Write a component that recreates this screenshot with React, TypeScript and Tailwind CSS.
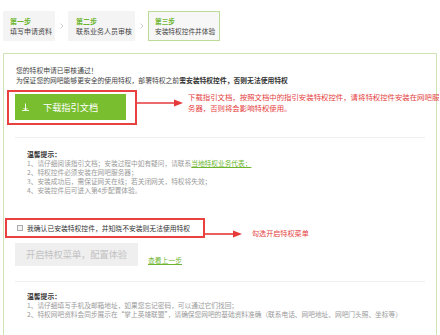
import React from "react";

const Arrow = ({ w }: { w: number }) => (
  <svg width={w} height={8} viewBox={`0 0 ${w} 8`} className="block shrink-0">
    <line x1={0} y1={4} x2={w - 7} y2={4} stroke="#e5393a" strokeWidth={1.6} />
    <polygon points={`${w - 9},0.5 ${w},4 ${w - 9},7.5`} fill="#e5393a" />
  </svg>
);

const Chevron = () => (
  <div className="w-[13px] flex items-center justify-center">
    <svg width="4" height="6" viewBox="0 0 4 6">
      <path d="M0.5 0.5 L3 3 L0.5 5.5" fill="none" stroke="#cfcfcf" strokeWidth="1" />
    </svg>
  </div>
);

export default function App() {
  return (
    <div className="w-[440px] h-[335px] overflow-hidden bg-white font-['Noto_Sans_CJK_SC','Microsoft_YaHei',sans-serif] text-[#333]">
      {/* steps */}
      <div className="flex items-stretch pt-[11px] pl-[3px]">
        <div className="w-[52px] h-[30px] bg-[#f4f4f4] pl-[7px] flex flex-col justify-center text-[7px] leading-[10px]">
          <div className="text-[#6db52e] font-bold">第一步</div>
          <div className="text-[#444]">填写申请资料</div>
        </div>
        <Chevron />
        <div className="w-[67px] h-[30px] bg-[#f4f4f4] pl-[8px] flex flex-col justify-center text-[7px] leading-[10px]">
          <div className="text-[#6db52e] font-bold">第二步</div>
          <div className="text-[#444]">联系业务人员审核</div>
        </div>
        <Chevron />
        <div className="w-[72px] h-[30px] bg-[#f7f7f7] border border-[#bcdb98] pl-[6px] flex flex-col justify-center text-[6.7px] leading-[10px]">
          <div className="text-[#6db52e] font-bold">第三步</div>
          <div className="text-[#444]">安装特权控件并体验</div>
        </div>
      </div>

      {/* panel */}
      <div className="mt-[12px] mx-[3px] h-[300px] border border-[#cfe4b4] pt-[11px]">
        <div className="pl-[12px] text-[6.8px] leading-[10px] text-[#444] whitespace-nowrap">
          <div>您的特权申请已审核通过！</div>
          <div>
            为保证您的网吧能够更安全的使用特权，部署特权之前
            <span className="font-bold text-[#333]">需安装特权控件，否则无法使用特权</span>
          </div>
        </div>

        {/* download row */}
        <div className="mt-[5px] pl-[3px] flex items-start">
          <div className="w-[130px] h-[35px] border-2 border-[#e8413f] pl-[6px] pt-[2px] shrink-0">
            <div className="w-[111px] h-[26px] bg-[#79be2f] flex items-center pl-[7px] text-white">
              <svg width="7" height="8" viewBox="0 0 7 8" className="shrink-0">
                <path d="M3.5 0.5V7 M1.5 5l2 2 2-2 M0 7.5h7" fill="none" stroke="#fff" strokeWidth="0.9" />
              </svg>
              <span className="ml-[14px] text-[9.2px] leading-[12px]">下载指引文档</span>
            </div>
          </div>
          <div className="mt-[9px]">
            <Arrow w={46} />
          </div>
          <div className="ml-[5px] mt-[1px] text-[7.4px] leading-[11px] text-[#e4403d] whitespace-nowrap">
            下载指引文档，按照文档中的指引安装特权控件，请将特权控件安装在网吧服
            <br />
            务器，否则将会影响特权使用。
          </div>
        </div>

        <div className="mt-[12px] mx-[11px] h-px bg-[#eeeeee]" />

        {/* tips 1 */}
        <div className="pl-[23px] mt-[11px] whitespace-nowrap">
          <div className="text-[6.8px] leading-[10px] font-bold text-[#333]">温馨提示：</div>
          <div className="text-[6.7px] leading-[9px] text-[#9a9a9a]">
            <div>
              1、请仔细阅读指引文档；安装过程中如有疑问，请联系
              <span className="text-[#6db52e] underline">当地特权业务代表；</span>
            </div>
            <div>2、特权控件必须安装在网吧服务器；</div>
            <div>3、安装成功后，需保证网关在线；若关闭网关，特权将失效；</div>
            <div>4、安装控件后可进入第4步配置体验。</div>
          </div>
        </div>

        {/* checkbox row */}
        <div className="mt-[23px] pl-[1px] flex items-start">
          <div className="w-[200px] h-[20px] border-2 border-[#e8413f] flex items-center pl-[10px] shrink-0">
            <div className="w-[6px] h-[6px] border border-[#aaa] bg-[#f3f3f3]" />
            <span className="ml-[4px] text-[6.8px] leading-[10px] text-[#333] whitespace-nowrap">
              我确认已安装特权控件，并知晓不安装则无法使用特权
            </span>
          </div>
          <div className="mt-[12px]">
            <Arrow w={37} />
          </div>
          <div className="ml-[10px] mt-[10px] text-[7.1px] leading-[11px] text-[#e4403d] whitespace-nowrap">
            勾选开启特权菜单
          </div>
        </div>

        <div className="mt-[4px] pl-[11px] flex items-end">
          <div className="w-[123px] h-[23px] bg-[#efefef] flex items-center justify-center text-[9.2px] text-[#c2c2c2] whitespace-nowrap">
            开启特权菜单，配置体验
          </div>
          <a className="ml-[10px] mb-[1px] text-[6.8px] leading-[9px] text-[#6db52e] underline whitespace-nowrap">
            查看上一步
          </a>
        </div>

        <div className="mt-[15px] mx-[11px] h-px bg-[#eeeeee]" />

        {/* tips 2 */}
        <div className="pl-[23px] mt-[9px] whitespace-nowrap">
          <div className="text-[6.8px] leading-[10px] font-bold text-[#333]">温馨提示：</div>
          <div className="text-[6.7px] leading-[9px] text-[#9a9a9a]">
            <div>1、请仔细填写手机及邮箱地址，如果您忘记密码，可以通过它们找回；</div>
            <div>2、特权网吧资料会同步展示在“掌上英雄联盟”，请确保您网吧的基础资料准确（联系电话、网吧地址、网吧门头照、坐标等）</div>
          </div>
        </div>
      </div>
    </div>
  );
}
